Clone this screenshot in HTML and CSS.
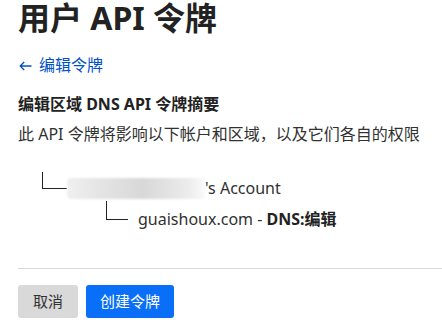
FILE: index.html
```html
<!DOCTYPE html>
<html lang="zh-CN">
<head>
<meta charset="utf-8">
<link rel="stylesheet" href="styles.css">
</head>
<body>
<main class="page">
  <h1 class="title">用户 API 令牌</h1>
  <a class="back-link" href="#"><svg class="arrow" width="13" height="10" viewBox="0 0 13 10" aria-hidden="true"><path d="M12.5 5H1.2M5.2 1L1.2 5L5.2 9" fill="none" stroke="currentColor" stroke-width="1.3"/></svg>编辑令牌</a>
  <h2 class="summary-title">编辑区域 DNS API 令牌摘要</h2>
  <p class="summary-desc">此 API 令牌将影响以下帐户和区域，以及它们各自的权限</p>
  <ul class="tree">
    <li class="tree-row account-row">
      <span class="elbow elbow-account"></span>
      <span class="redacted"></span>
      <span class="row-text">'s Account</span>
    </li>
    <li class="tree-row zone-row">
      <span class="elbow elbow-zone"></span>
      <span class="row-text">guaishoux.com - <strong>DNS:编辑</strong></span>
    </li>
  </ul>
  <hr class="divider">
  <div class="actions">
    <button class="btn btn-secondary">取消</button>
    <button class="btn btn-primary">创建令牌</button>
  </div>
</main>
</body>
</html>
```
FILE: styles.css
```css
html, body {
  margin: 0;
  padding: 0;
  background: #ffffff;
}
body {
  font-family: "Noto Sans", "Noto Sans CJK SC", sans-serif;
  color: #313131;
  overflow: hidden;
}
.page {
  padding: 0 0 0 18px;
  display: flex;
  flex-direction: column;
  align-items: flex-start;
}
.title {
  margin: 0;
  font-size: 32px;
  line-height: 36px;
  font-weight: 700;
  color: #222222;
}
.back-link {
  margin-top: 17px;
  display: flex;
  align-items: center;
  font-size: 16px;
  line-height: 24px;
  color: #0051c3;
  text-decoration: none;
}
.arrow {
  margin: 1px 7px 0 1px;
}
.summary-title {
  margin: 15px 0 0;
  font-size: 16px;
  line-height: 24px;
  font-weight: 700;
  color: #222222;
}
.summary-desc {
  margin: 6px 0 0;
  font-size: 16px;
  line-height: 24px;
}
.tree {
  list-style: none;
  margin: 30px 0 0;
  padding: 0 0 0 24px;
  display: flex;
  flex-direction: column;
}
.tree-row {
  display: flex;
  align-items: center;
  height: 24px;
  font-size: 16px;
  line-height: 24px;
}
.elbow {
  box-sizing: border-box;
  align-self: flex-start;
  border-left: 1px solid #222;
  border-bottom: 1px solid #222;
}
.elbow-account {
  width: 25px;
  height: 17px;
  margin-top: -4px;
}
.redacted {
  width: 138px;
  height: 21px;
  background: linear-gradient(90deg, #f0f0f0 0%, #e6e6e6 20%, #dedede 40%, #d8d8d8 55%, #e2e2e2 72%, #ececec 88%, #fafafa 100%);
  border-radius: 4px 0 0 4px;
  filter: blur(1px);
}
.zone-row {
  margin-top: 7px;
  padding-left: 64px;
}
.elbow-zone {
  width: 22px;
  height: 19px;
  margin-top: -6px;
  margin-right: 10px;
}
.row-text strong {
  font-weight: 700;
  color: #222;
}
.divider {
  align-self: stretch;
  margin: 37px 0 0;
  border: 0;
  border-top: 1px solid #d9d9d9;
  height: 0;
}
.actions {
  display: flex;
  gap: 8px;
  margin-top: 16px;
}
.btn {
  height: 33px;
  border: 0;
  border-radius: 3px;
  font-family: "Noto Sans", "Noto Sans CJK SC", sans-serif;
  font-size: 15px;
  line-height: 33px;
}
.btn-secondary {
  padding: 0 15px;
  background: #d9d9d9;
  color: #313131;
}
.btn-primary {
  padding: 0 14px;
  background: #0a6ff8;
  color: #ffffff;
}
```
